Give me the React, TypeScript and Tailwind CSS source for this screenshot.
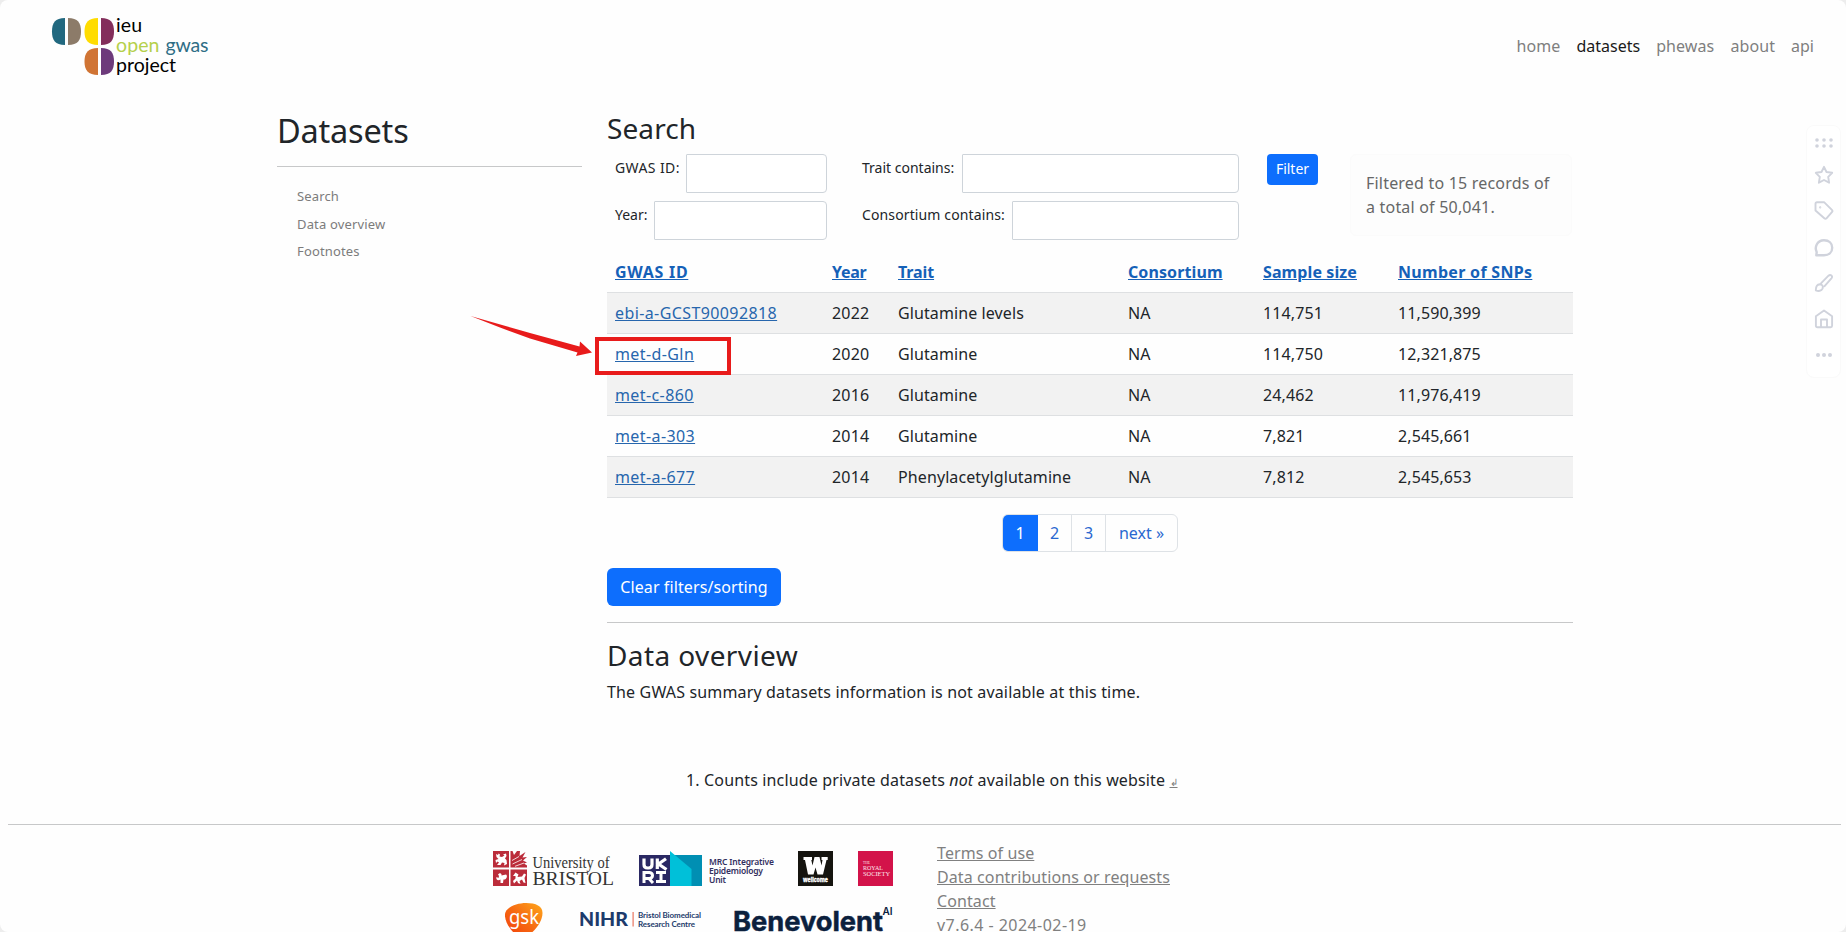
import type { ReactNode } from "react";

type Dataset = {
  id: string;
  year: string;
  trait: string;
  consortium: string;
  size: string;
  snps: string;
};

const datasets: Dataset[] = [
  { id: "ebi-a-GCST90092818", year: "2022", trait: "Glutamine levels", consortium: "NA", size: "114,751", snps: "11,590,399" },
  { id: "met-d-Gln", year: "2020", trait: "Glutamine", consortium: "NA", size: "114,750", snps: "12,321,875" },
  { id: "met-c-860", year: "2016", trait: "Glutamine", consortium: "NA", size: "24,462", snps: "11,976,419" },
  { id: "met-a-303", year: "2014", trait: "Glutamine", consortium: "NA", size: "7,821", snps: "2,545,661" },
  { id: "met-a-677", year: "2014", trait: "Phenylacetylglutamine", consortium: "NA", size: "7,812", snps: "2,545,653" },
];

const columns = [
  { name: "GWAS ID", className: "tracking-[0.7px]" },
  { name: "Year", className: "tracking-[-0.3px]" },
  { name: "Trait", className: "tracking-[-0.1px]" },
  { name: "Consortium", className: "tracking-[0.1px]" },
  { name: "Sample size", className: "tracking-[0.1px]" },
  { name: "Number of SNPs", className: "tracking-[0.3px]" },
];

function ProjectLogo() {
  return (
    <svg className="mt-[2px] h-[68px] w-[164px]" viewBox="50 13 164 68" fontFamily="Lato, sans-serif" fontSize="19.500">
      <path d="M65 18C55 18 52 23 52 31.500S55 45 65 45Z" fill="#21687f" />
      <path d="M68 18C78 18 81 23 81 31.500S78 45 68 45Z" fill="#8c7b69" />
      <path d="M98 18C88 18 84.500 23 84.500 31.500S88 45 98 45Z" fill="#ffdc00" />
      <path d="M101 18C111 18 114 23 114 31.500S111 45 101 45Z" fill="#832e5b" />
      <path d="M98 48C88 48 84.500 53 84.500 61.500S88 75 98 75Z" fill="#d07434" />
      <path d="M101 48C111 48 114 53 114 61.500S111 75 101 75Z" fill="#6d3a7b" />
      <text x="116" y="32" textLength="26" fill="#000">ieu</text>
      <text x="116" y="52" textLength="43.500" fill="#b5d04b">open</text>
      <text x="165.500" y="52" textLength="43" fill="#2f6e86">gwas</text>
      <text x="116" y="72" textLength="60" fill="#000">project</text>
    </svg>
  );
}

function Field({ label, labelClass, inputClass }: { label: string; labelClass: string; inputClass: string }) {
  return (
    <div className="flex h-[39px]">
      <label className={`pt-[3px] text-sm leading-[21px] whitespace-nowrap ${labelClass}`}>{label}</label>
      <input className={`h-[39px] rounded-r-[4px] rounded-l-[1px] border border-[#ced4da] bg-white outline-none ${inputClass}`} />
    </div>
  );
}

function Rule({ className }: { className: string }) {
  return <div className={`h-px bg-[#c7c8c9] ${className}`} />;
}

function BristolLogo() {
  return (
    <svg className="h-[37px] w-[123px]" viewBox="0 0 123 37" fontFamily="'Liberation Serif', serif" fill="#333">
      <g fill="#bb2c3a">
        <path d="M0 0H16V16.500H0Z" />
        <path d="M17.500 0H19.500L21 4L24 0H27L26.500 5L32.500 1L29.500 6.500L34 6L30 9.500L34 11.500L31 12.500L34 14.500V16.500H17.500Z" />
        <path d="M0 18.500H16V35H0Z" />
        <path d="M17.500 18.500H34V35H17.500Z" />
      </g>
      <g fill="#fff">
        <path d="M3 3L5 4L5.500 2.500L7 3.500L6.500 5.500L9 6L11.500 4.500L10 3.500L13 2.500L13.500 5L12 7.500L13.500 9L14 13L11 14.500L11.500 12L9 11.500L7.500 14H4L6 11.500L4.500 10.500L3 12L2.500 9L5.500 8L3.500 6Z" />
        <path d="M5 23.500C7 21 9 22.500 8.500 24.500L13 23.500C15 25 13.500 29 10.500 28.500L10 32H7.500V28.500C5 30.500 2.500 28.500 3.500 26L5.500 27L6 25Z" />
        <path d="M20 25L22.500 21.500L25.500 23.500L24.500 26L29 25.500L31 22.500L33 23.500L31.500 27L32.500 32L30.500 31.500L29 28.500L26.500 30L27.500 33L25 32L24 29.500L21 32.500L20 30L22.500 27.500L22.500 25Z" />
      </g>
      <path d="M19 9.500L26 5.500M19.500 13L29 8.500M22 15.300L31 12" fill="none" stroke="#fff" strokeWidth=".8" />
      <text x="39.500" y="17" fontSize="16" textLength="77" lengthAdjust="spacingAndGlyphs">University of</text>
      <text x="39.500" y="34" fontSize="18.500" textLength="81.500" lengthAdjust="spacingAndGlyphs">BRISTOL</text>
    </svg>
  );
}

function UkriLogo() {
  return (
    <svg className="h-[37px] w-[138px]" viewBox="0 0 138 37" fontFamily="'Noto Sans', sans-serif">
      <path d="M0 4H31V35H0Z" fill="#2a2863" />
      <path d="M31 4H63V35H31Z" fill="#008fb3" />
      <path d="M31 0L52.500 18V35H31Z" fill="#00c0d9" />
      <g fill="none" stroke="#fff" strokeWidth="3.200">
        <path d="M5 7.500V13.500Q5 17 8.500 17H9.500Q13 17 13 13.500V7.500" />
        <path d="M18.300 7.500V18M27 7.800L19.500 13L27.500 18.500" />
        <path d="M5 32V21.500H10.500Q13.500 22 13.500 24.500T10.500 27.500H5M9.500 27L14 32M17 21.500H27M22 21V31M17 30.500H27" strokeWidth="3" />
      </g>
      <g fill="#33305f" fontSize="8.500" fontWeight="600">
        <text x="70" y="13.500" textLength="65">MRC Integrative</text>
        <text x="70" y="22.500" textLength="54">Epidemiology</text>
        <text x="70" y="31.500" textLength="17">Unit</text>
      </g>
    </svg>
  );
}

function WellcomeLogo() {
  return (
    <svg className="size-[35px]" viewBox="0 0 35 35">
      <path d="M0 0H35V35H0Z" fill="#15140f" />
      <path d="M5.500 6H14V9H13.300L14.500 14.500L16.500 6H21.500L23.500 14.500L24.500 9H23.500V6H29.700V9H28.500L25 23.500H19.500L17.500 16.500L15.500 23.500H10L7 9H5.500Z" fill="#fff" />
      <text x="5" y="30.800" textLength="25" lengthAdjust="spacingAndGlyphs" fontFamily="'Noto Sans', sans-serif" fontSize="6.500" fontWeight="800" fill="#fff" stroke="#fff" strokeWidth=".3">wellcome</text>
    </svg>
  );
}

function RoyalSocietyLogo() {
  return (
    <svg className="size-[35px]" viewBox="0 0 35 35" fontFamily="'Liberation Serif', serif" fill="#fde6ec">
      <path d="M0 0H35V35H0Z" fill="#d3134a" />
      <text x="5" y="13" fontSize="3.500" textLength="7">THE</text>
      <text x="5" y="18.700" fontSize="6.800" textLength="20" lengthAdjust="spacingAndGlyphs">ROYAL</text>
      <text x="5" y="24.700" fontSize="6.800" textLength="27" lengthAdjust="spacingAndGlyphs">SOCIETY</text>
    </svg>
  );
}

function GskLogo() {
  return (
    <svg className="h-[34px] w-[39px]" viewBox="0 0 39 34">
      <defs>
        <linearGradient id="gsk" x1="0" y1="1" x2="1" y2="0">
          <stop offset="0" stopColor="#f23c0a" />
          <stop offset=".5" stopColor="#f66a12" />
          <stop offset="1" stopColor="#ffa81c" />
        </linearGradient>
      </defs>
      <path d="M0 11C1 4 12 0 21 0C31 0 37.500 3 37.500 10C37.500 20 26 34 17 34C9 34 -1 19 0 11Z" fill="url(#gsk)" />
      <text x="4" y="20.500" textLength="30" lengthAdjust="spacingAndGlyphs" fontFamily="'Noto Sans', sans-serif" fontSize="19" fill="#fff">gsk</text>
    </svg>
  );
}

function NihrLogo() {
  return (
    <svg className="h-[34px] w-[124px]" viewBox="0 0 124 34" fontFamily="Lato, sans-serif" fill="#1d3b6c">
      <text x="-1" y="23" fontSize="19.500" fontWeight="900" textLength="49" lengthAdjust="spacingAndGlyphs">NIHR</text>
      <path d="M52.500 9H53.700V23.500H52.500Z" fill="#e8745f" />
      <g fontSize="8" fontWeight="700">
        <text x="58" y="15" textLength="63">Bristol Biomedical</text>
        <text x="58" y="23.500" textLength="57">Research Centre</text>
      </g>
    </svg>
  );
}

function BenevolentLogo() {
  return (
    <svg className="h-[34px] w-[162px]" viewBox="0 0 162 34" fontFamily="Inter, sans-serif" fill="#0b203d" fontWeight="700">
      <text x="0" y="28" fontSize="27" stroke="#0b203d" strokeWidth=".5" textLength="150" lengthAdjust="spacingAndGlyphs">Benevolent</text>
      <text x="149.500" y="12" fontSize="10" fontWeight="600" textLength="10">AI</text>
    </svg>
  );
}

function ToolIcon({ children, top }: { children: ReactNode; top: string }) {
  return (
    <svg className={`size-5 ${top}`} viewBox="0 0 20 20" fill="none" stroke="#d0d3dc" strokeWidth="1.900" strokeLinejoin="round" strokeLinecap="round">
      {children}
    </svg>
  );
}

function FloatingTools() {
  return (
    <div className="absolute top-[125px] left-[1806px] flex h-[253px] w-[35px] flex-col items-center rounded-[8px] border border-[#fafafa] bg-white">
      <ToolIcon top="mt-[7px]">
        <g fill="#d0d3dc" stroke="none">
          <circle cx="3" cy="7" r="1.800" /><circle cx="10" cy="7" r="1.800" /><circle cx="17" cy="7" r="1.800" />
          <circle cx="3" cy="13" r="1.800" /><circle cx="10" cy="13" r="1.800" /><circle cx="17" cy="13" r="1.800" />
        </g>
      </ToolIcon>
      <ToolIcon top="mt-[12px]">
        <path d="M10 1.800L12.500 7L18.200 7.800L14.200 11.800L15.100 17.700L10 15L4.900 17.700L5.800 11.800L1.800 7.800L7.500 7Z" />
      </ToolIcon>
      <ToolIcon top="mt-[16px]">
        <path d="M1.500 2.800Q1.500 1.300 3 1.300H10.300L17.900 8.900Q19 10 17.900 11.200L12.700 17.200Q11.500 18.400 10.300 17.300L1.500 9.500Z" />
        <circle cx="6.200" cy="6.400" r=".4" strokeWidth="1.400" />
      </ToolIcon>
      <ToolIcon top="mt-[17px]">
        <path d="M10 2.300C15 2.300 18.200 5.500 18.200 9.800S15 17.300 10 17.300H2.300L2.700 14.100C.3 9.500 2.800 2.300 10 2.300Z" strokeWidth="2.400" />
      </ToolIcon>
      <ToolIcon top="mt-[15px]">
        <path d="M7.200 10.200L14.500 2.700C16.500 .8 19.200 3.200 17.400 5.400L10.600 13.200M1.800 17.300C1.800 14 2.800 11.500 5.800 11.300C8.500 11.300 9.300 13.500 8.500 15.600C7.500 18 4.500 18.500 1.800 17.300Z" />
      </ToolIcon>
      <ToolIcon top="mt-[16px]">
        <path d="M1.900 7.300L10 1.500L18.100 7.300V16.800Q18.100 18.300 16.600 18.300H3.400Q1.900 18.300 1.900 16.800ZM7 18V10.500H13V18" />
      </ToolIcon>
      <ToolIcon top="mt-[16px]">
        <g fill="#d0d3dc" stroke="none">
          <circle cx="4" cy="10" r="2" /><circle cx="10" cy="10" r="2" /><circle cx="16" cy="10" r="2" />
        </g>
      </ToolIcon>
    </div>
  );
}

export default function App() {
  return (
    <div className="h-[932px] w-[1846px] overflow-hidden bg-[#ededed]">
      <div className="relative flex h-[932px] flex-col overflow-hidden rounded-[8px] bg-[#fefefe] font-['Noto_Sans',sans-serif] text-base leading-6 text-[#212529]">
        <header className="flex h-[92px] shrink-0 items-center justify-between pr-8 pl-[50px]">
          <ProjectLogo />
          <nav className="flex gap-4 text-[#7f7f7f]">
            <a className="tracking-[0.1px]">home</a>
            <a className="text-[#1a1a1a]">datasets</a>
            <a className="tracking-[0.1px]">phewas</a>
            <a className="tracking-[0.1px]">about</a>
            <a>api</a>
          </nav>
        </header>

        <main className="flex h-[732px] shrink-0 gap-[25px] pt-[19px] pl-[277px]">
          <aside className="w-[305px]">
            <h2 className="h-[55px] pt-px text-[32.500px] leading-[38px] tracking-[-0.2px]">Datasets</h2>
            <Rule className="" />
            <ul className="flex flex-col gap-[7.500px] pt-[19px] pl-5 text-[13px] leading-5 tracking-[0.15px] text-[#7c7c7c]">
              <li>Search</li>
              <li>Data overview</li>
              <li>Footnotes</li>
            </ul>
          </aside>

          <section className="flex w-[966px] flex-col">
            <h3 className="mb-[9px] text-[28px] leading-[34px] tracking-[0.1px]">Search</h3>
            <form className="flex h-[97px] items-start pl-2">
              <div className="flex w-[212px] flex-col gap-2">
                <Field label="GWAS ID:" labelClass="w-[71px] tracking-[0.4px]" inputClass="w-[141px]" />
                <Field label="Year:" labelClass="w-[39px]" inputClass="w-[173px]" />
              </div>
              <div className="ml-[35px] flex w-[377px] flex-col gap-2">
                <Field label="Trait contains:" labelClass="w-[100px]" inputClass="w-[277px]" />
                <Field label="Consortium contains:" labelClass="w-[150px] tracking-[0.12px]" inputClass="w-[227px]" />
              </div>
              <button type="button" className="ml-7 h-[31px] w-[51px] rounded-[4px] bg-[#0d6efd] pb-px text-sm text-white">
                Filter
              </button>
              <p className="ml-[32px] h-[82px] w-[222px] rounded-[6px] border border-[#fbfbfb] bg-[#fdfdfd] py-4 pl-[15px] tracking-[0.2px] text-[#666767]">
                Filtered to 15 records of
                <br />a total of 50,041.
              </p>
            </form>

            <table className="w-[966px] table-fixed border-collapse text-left">
              <colgroup>
                <col className="w-[217px]" />
                <col className="w-[66px]" />
                <col className="w-[230px]" />
                <col className="w-[135px]" />
                <col className="w-[135px]" />
                <col className="w-[183px]" />
              </colgroup>
              <thead>
                <tr className="h-[41px] border-b border-[#dee0e2]">
                  {columns.map((column) => (
                    <th key={column.name} className={`px-2 pt-px pb-0 font-bold whitespace-nowrap text-[#1561b8] underline ${column.className}`}>
                      {column.name}
                    </th>
                  ))}
                </tr>
              </thead>
              <tbody>
                {datasets.map((row, index) => (
                  <tr key={row.id} className={index % 2 === 0 ? "h-[41px] border-b border-[#dee0e2] bg-[#f2f2f2]" : "h-[41px] border-b border-[#dee0e2]"}>
                    <td className="px-2 py-0 tracking-[0.4px] whitespace-nowrap text-[#2766ad] underline">{row.id}</td>
                    <td className="px-2 py-0 tracking-[0.2px]">{row.year}</td>
                    <td className="px-2 py-0 tracking-[0.1px]">{row.trait}</td>
                    <td className="px-2 py-0">{row.consortium}</td>
                    <td className="px-2 py-0 tracking-[0.1px]">{row.size}</td>
                    <td className="px-2 py-0 tracking-[0.1px]">{row.snps}</td>
                  </tr>
                ))}
              </tbody>
            </table>

            <div className="mt-4 flex h-[38px] w-[176px] self-center overflow-hidden rounded-[6px] border border-[#dee2e6] text-center leading-9 text-[#2a68d0]">
              <span className="-m-px h-[38px] w-[36px] bg-[#0d6efd] leading-[38px] text-white">1</span>
              <span className="w-[35px] border-r border-[#dee2e6] pl-px">2</span>
              <span className="w-[34px] border-r border-[#dee2e6]">3</span>
              <span className="flex-1">next »</span>
            </div>

            <button type="button" className="mt-4 h-[38px] w-[174px] rounded-[6px] bg-[#0d6efd] tracking-[0.1px] whitespace-nowrap text-white">
              Clear filters/sorting
            </button>
            <Rule className="mt-4" />
            <h3 className="mt-[15px] mb-2 text-[28px] leading-[34px] tracking-[0.4px]">Data overview</h3>
            <p className="tracking-[0.16px]">The GWAS summary datasets information is not available at this time.</p>
            <p className="mt-16 pl-[79px] tracking-[0.15px]">
              1. Counts include private datasets <em>not</em> available on this website{" "}
              <span className="text-[10px] tracking-normal text-[#808080] underline">↲</span>
            </p>
          </section>
        </main>

        <footer className="mr-[5px] ml-2 shrink-0">
          <Rule className="" />
          <div className="flex pt-4 pl-[485px]">
            <div className="w-[444px]">
              <div className="flex h-[62px] pt-[10px]">
                <BristolLogo />
                <div className="ml-[23px]"><UkriLogo /></div>
                <div className="ml-[21px]"><WellcomeLogo /></div>
                <div className="ml-[25px]"><RoyalSocietyLogo /></div>
              </div>
              <div className="flex h-[34px] pl-[12px]">
                <GskLogo />
                <div className="ml-[36px]"><NihrLogo /></div>
                <div className="ml-[29px]"><BenevolentLogo /></div>
              </div>
            </div>
            <ul className="tracking-[0.1px] text-[#808080]">
              <li className="underline">Terms of use</li>
              <li className="underline">Data contributions or requests</li>
              <li className="underline">Contact</li>
              <li className="tracking-[0.45px]">v7.6.4 - 2024-02-19</li>
            </ul>
          </div>
        </footer>

        <FloatingTools />
        <div className="absolute top-[337px] left-[595px] h-[38px] w-[136px] border-4 border-[#e81b1b]" />
        <svg className="absolute top-[310px] left-[465px] h-[50px] w-[130px]" viewBox="465 310 130 50" fill="#e81b1b">
          <path d="M470.500 316L530 333L579.500 346.500L580 341.500L592 352.500L576 356L577.500 352.500L530 338.500L500 327.500Z" />
        </svg>
      </div>
    </div>
  );
}
